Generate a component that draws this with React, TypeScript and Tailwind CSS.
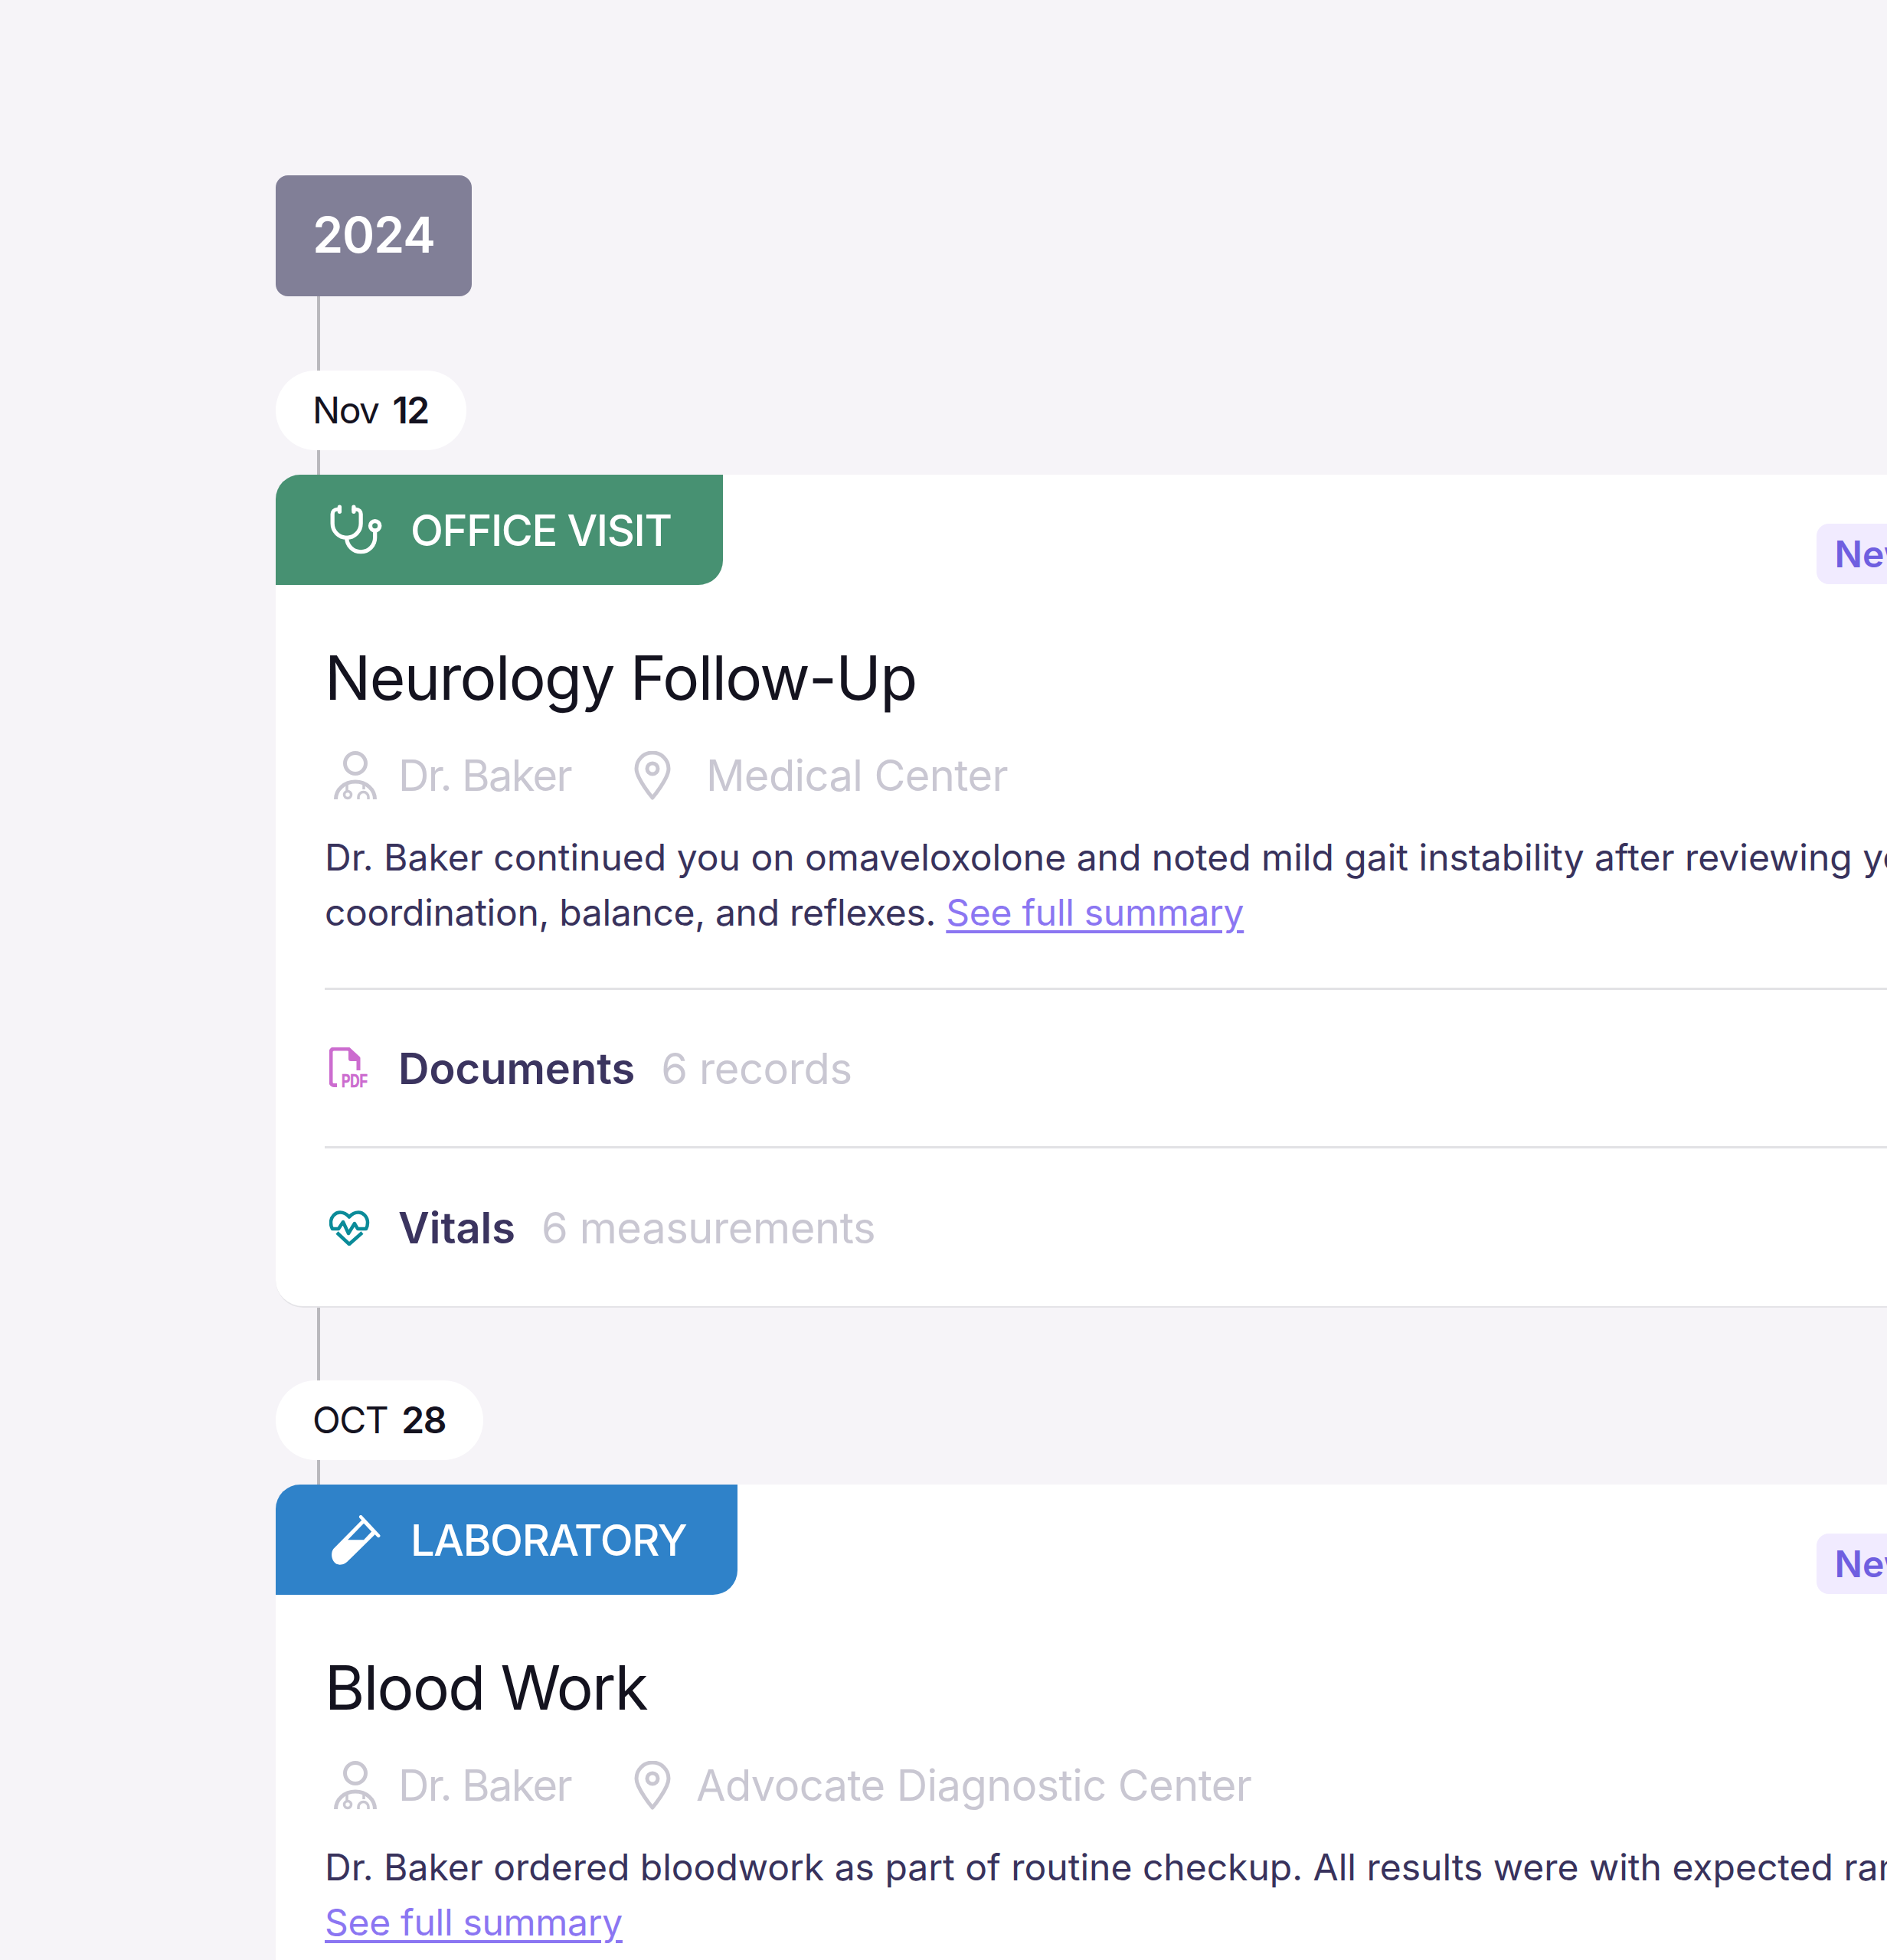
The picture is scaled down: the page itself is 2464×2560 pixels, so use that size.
import React from "react";

const Stethoscope = () => (
  <svg width="74" height="74" viewBox="0 0 24 24" fill="none" stroke="white" strokeWidth="1.7" strokeLinecap="round" strokeLinejoin="round" className="-mr-[2px]">
    <path d="M11 2v2" />
    <path d="M5 2v2" />
    <path d="M5 3H4a2 2 0 0 0-2 2v4a6 6 0 0 0 12 0V5a2 2 0 0 0-2-2h-1" />
    <path d="M8 15a6 6 0 0 0 12 0v-3" />
    <circle cx="20" cy="10" r="2" />
  </svg>
);

const TestTube = () => (
  <div className="flex w-[72px] justify-center">
    <svg width="66" height="66" viewBox="0 0 24 24" fill="white">
      <path
        fillRule="evenodd"
        d="M15.2 2.2 1.6 16C-.2 18.5 1 23.500 4.600 23.500c1.900 0 3.200-.8 4.400-2.200L21.500 9ZM8.400 11.700 16 3.900l3.700 3.900-3.700 3.900Z"
      />
      <path d="M14.600.8 23 9.800" stroke="white" strokeWidth="1.6" strokeLinecap="round" />
    </svg>
  </div>
);

const DoctorIcon = () => (
  <svg width="56" height="64" viewBox="0 0 56 64" fill="none" stroke="#c9c7d1" strokeWidth="5" className="shrink-0">
    <circle cx="28" cy="16" r="13.500" />
    <path d="M2.500 63C2.500 50 14 40 28 40s25.500 10 25.500 23" strokeWidth="5" />
    <path d="M17 41v11" strokeWidth="3.500" />
    <circle cx="18" cy="57" r="4.500" strokeWidth="3.500" />
    <path d="M39 41v9" strokeWidth="3.500" />
    <path d="M32 63v-3a6 6 0 0 1 13 0v3" strokeWidth="3.500" />
  </svg>
);

const PinIcon = () => (
  <svg width="48" height="64" viewBox="0 0 48 64" fill="none" stroke="#c9c7d1" strokeWidth="5" strokeLinejoin="round" className="shrink-0">
    <path d="M24 61S3 36 3 23a21 21 0 0 1 42 0c0 13-21 38-21 38Z" />
    <circle cx="24" cy="23" r="7" strokeWidth="5" />
  </svg>
);

const PdfIcon = () => (
  <svg width="54" height="56" viewBox="0 0 54 56" fill="none" className="shrink-0">
    <path d="M10 49.500H6a4 4 0 0 1-4-4V6a4 4 0 0 1 4-4h19l13 12v16" stroke="#cc6ccf" strokeWidth="5" strokeLinejoin="round" />
    <path d="M25 2 38 14v4H28a3 3 0 0 1-3-3Z" fill="#cc6ccf" />
    <text x="16" y="51.500" fontSize="23" fontWeight="700" fill="#cc6ccf" stroke="#cc6ccf" strokeWidth="0.7" textLength="34" lengthAdjust="spacingAndGlyphs" fontFamily="'Liberation Sans', sans-serif">
      PDF
    </text>
  </svg>
);

const HeartIcon = () => (
  <svg width="54" height="46" viewBox="0 0 54 46" fill="none" stroke="#0a8b99" strokeWidth="4.500" strokeLinejoin="round" className="shrink-0">
    <path d="M4 24c-1.500-2.500-2-5-2-8C2 8 8 2.500 14 2.500c5 0 9 2.500 12 6 3-3.500 7-6 12-6 6 0 12 5.500 12 13.500 0 3-.5 5.500-2 8H37l-4-7-8 13-7-15-6 9Z" />
    <path d="M10 29l16 15 17-15" />
  </svg>
);

const Connector = ({ className }: { className: string }) => (
  <div className={`ml-[54px] w-1 bg-[#b9b8bd] ${className}`} />
);

const DatePill = ({ month, day }: { month: string; day: string }) => (
  <div className="flex h-[104px] w-fit items-center gap-[18px] rounded-[52px] bg-white pr-[49px] pl-12 text-[48px] tracking-[-1.5px] text-[#14121f]">
    <span>{month}</span>
    <span className="font-semibold">{day}</span>
  </div>
);

const SummaryRow = ({
  icon,
  label,
  count,
  last,
}: {
  icon: React.ReactNode;
  label: string;
  count: string;
  last?: boolean;
}) => (
  <div className={`flex items-center pt-[2px] ${last ? "h-[206px]" : "h-[207px] border-b-[3px] border-[#e2e2e5]"}`}>
    <div className="flex w-[96px] pl-[6px]">{icon}</div>
    <span className="text-[56px] font-semibold text-[#3b345f]">{label}</span>
    <span className="ml-[34px] text-[56px] tracking-[-0.4px] text-[#c9c7d2]">{count}</span>
  </div>
);

type VisitProps = {
  tabClass: string;
  tabIcon: React.ReactNode;
  tabLabel: string;
  title: string;
  place: string;
  placeGap: string;
  children: React.ReactNode;
  rows?: boolean;
};

const VisitCard = ({ tabClass, tabIcon, tabLabel, title, place, placeGap, children, rows }: VisitProps) => (
  <div className="w-[2228px] shrink-0 rounded-[36px] border-b-2 border-[#e4e3e7] bg-white">
    <div className="flex items-end justify-between pr-16">
      <div className={`flex h-[144px] items-center gap-[36px] rounded-tl-[32px] rounded-br-[32px] pt-px pr-[67px] pl-[68px] ${tabClass}`}>
        {tabIcon}
        <span className="text-[56px] font-medium tracking-[-1.35px] text-white">{tabLabel}</span>
      </div>
      <div className="mb-px flex h-[79px] items-center rounded-[16px] bg-[#f1ebff] px-6 text-[48px] font-semibold text-[#6f5fe0]">
        New
      </div>
    </div>
    <div className={`px-[64px] ${rows ? "" : "pb-16"}`}>
      <h2 className="mt-[71px] text-[80px] leading-[100px] font-normal tracking-[-1.6px] text-[#14131f]">{title}</h2>
      <div className="mt-[46px] flex h-[64px] items-center text-[56px] text-[#c9c7d2]">
        <div className="ml-3">
          <DoctorIcon />
        </div>
        <span className="ml-[28px] tracking-[-1.7px]">Dr. Baker</span>
        <div className="ml-[82px]">
          <PinIcon />
        </div>
        <span className={`tracking-[-0.6px] ${placeGap}`}>{place}</span>
      </div>
      <p className="mt-[39px] text-[48px] leading-[72px] whitespace-nowrap text-[#38325c]">{children}</p>
      {rows && (
        <>
          <div className="mt-[62px] border-b-[3px] border-[#e2e2e5]" />
          <SummaryRow icon={<PdfIcon />} label="Documents" count="6 records" />
          <SummaryRow icon={<HeartIcon />} label="Vitals" count="6 measurements" last />
        </>
      )}
    </div>
  </div>
);

const FullSummary = () => (
  <a className="tracking-[-0.3px] text-[#8b76f2] underline underline-offset-[6px]">See full summary</a>
);

export default function App() {
  return (
    <div className="h-[2560px] w-[2464px] overflow-hidden bg-[#f6f4f8] pt-[229px] pl-[360px]" style={{ fontFamily: "Inter, sans-serif" }}>
      <div className="flex h-[158px] w-[256px] items-center justify-center rounded-[16px] bg-[#817f97] pb-[2px] text-[64px] font-semibold tracking-[-1px] text-white">
        2024
      </div>
      <Connector className="h-[97px]" />
      <DatePill month="Nov" day="12" />
      <Connector className="h-[32px]" />
      <VisitCard
        tabClass="bg-[#479172]"
        tabIcon={<Stethoscope />}
        tabLabel="OFFICE VISIT"
        title="Neurology Follow-Up"
        place="Medical Center"
        placeGap="ml-[46px]"
        rows
      >
        Dr. Baker continued you on omaveloxolone and noted mild gait instability after reviewing your
        <br />
        <span className="tracking-[-0.3px]">coordination, balance, and reflexes. </span>
        <FullSummary />
      </VisitCard>
      <Connector className="h-[95px]" />
      <DatePill month="OCT" day="28" />
      <Connector className="h-[32px]" />
      <VisitCard
        tabClass="bg-[#2f82c9]"
        tabIcon={<TestTube />}
        tabLabel="LABORATORY"
        title="Blood Work"
        place="Advocate Diagnostic Center"
        placeGap="ml-[33px]"
      >
        Dr. Baker ordered bloodwork as part of routine checkup. All results were with expected ranges.
        <br />
        <FullSummary />
      </VisitCard>
    </div>
  );
}
